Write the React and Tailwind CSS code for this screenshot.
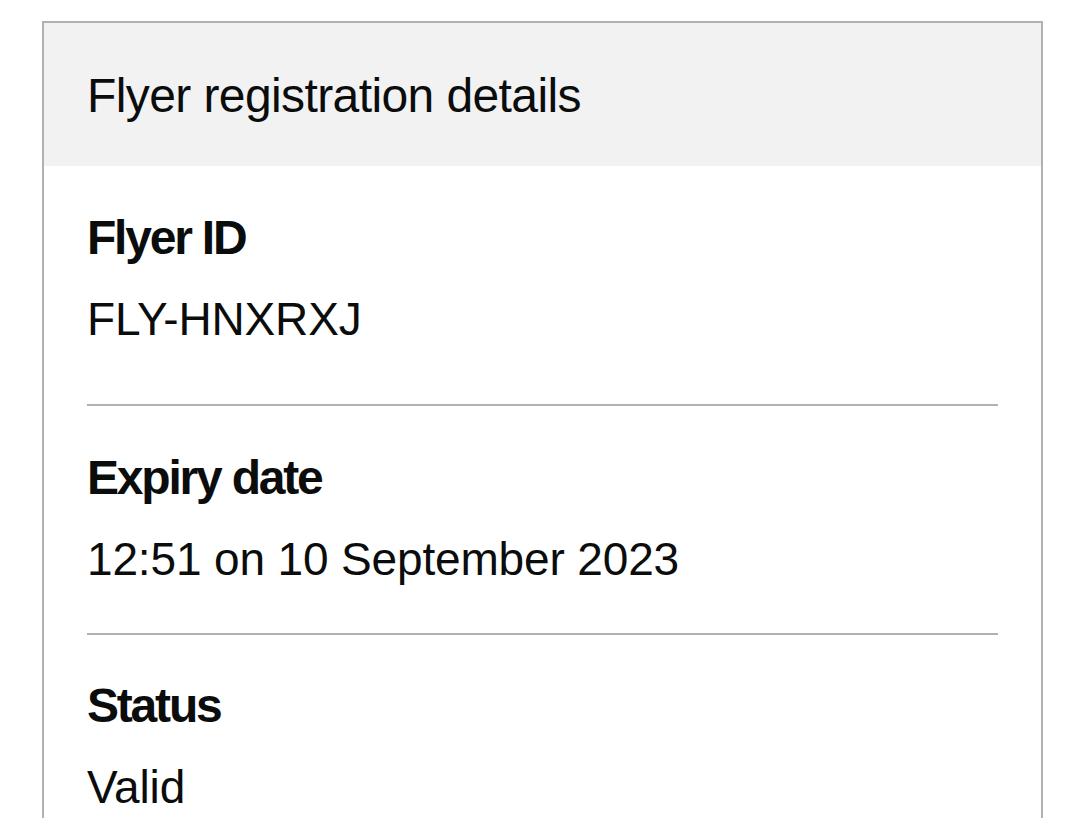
const rows = [
  { label: "Flyer ID", value: "FLY-HNXRXJ", gap: "mb-[62px]" },
  { label: "Expiry date", value: "12:51 on 10 September 2023", gap: "mb-[51px]" },
  { label: "Status", value: "Valid", gap: "" },
];

export default function App() {
  return (
    <div className="min-h-screen bg-white text-[#0b0c0c] font-['Liberation_Sans',Arial,sans-serif] overflow-hidden">
      <div className="ml-[42px] mt-[21px] w-[1001px] border-2 border-[#b1b1b1]">
        {/* card header */}
        <div className="bg-[#f2f2f2] h-[143px] px-[43px] pt-[49px]">
          <h2 className="text-[48px] leading-none font-normal tracking-[-0.6px]">
            Flyer registration details
          </h2>
        </div>

        <dl className="px-[43px]">
          {rows.map((row, i) => (
            <div
              key={row.label}
              className={
                i < rows.length - 1
                  ? "pt-[48px] border-b-2 border-[#b1b1b1]"
                  : "pt-[47px] pb-[40px]"
              }
            >
              <dt className="text-[48px] leading-none font-bold tracking-[-2.2px]">
                {row.label}
              </dt>
              <dd className={`mt-[34px] text-[46px] leading-none tracking-[-0.15px] ${row.gap}`}>
                {row.value}
              </dd>
            </div>
          ))}
        </dl>
      </div>
    </div>
  );
}
